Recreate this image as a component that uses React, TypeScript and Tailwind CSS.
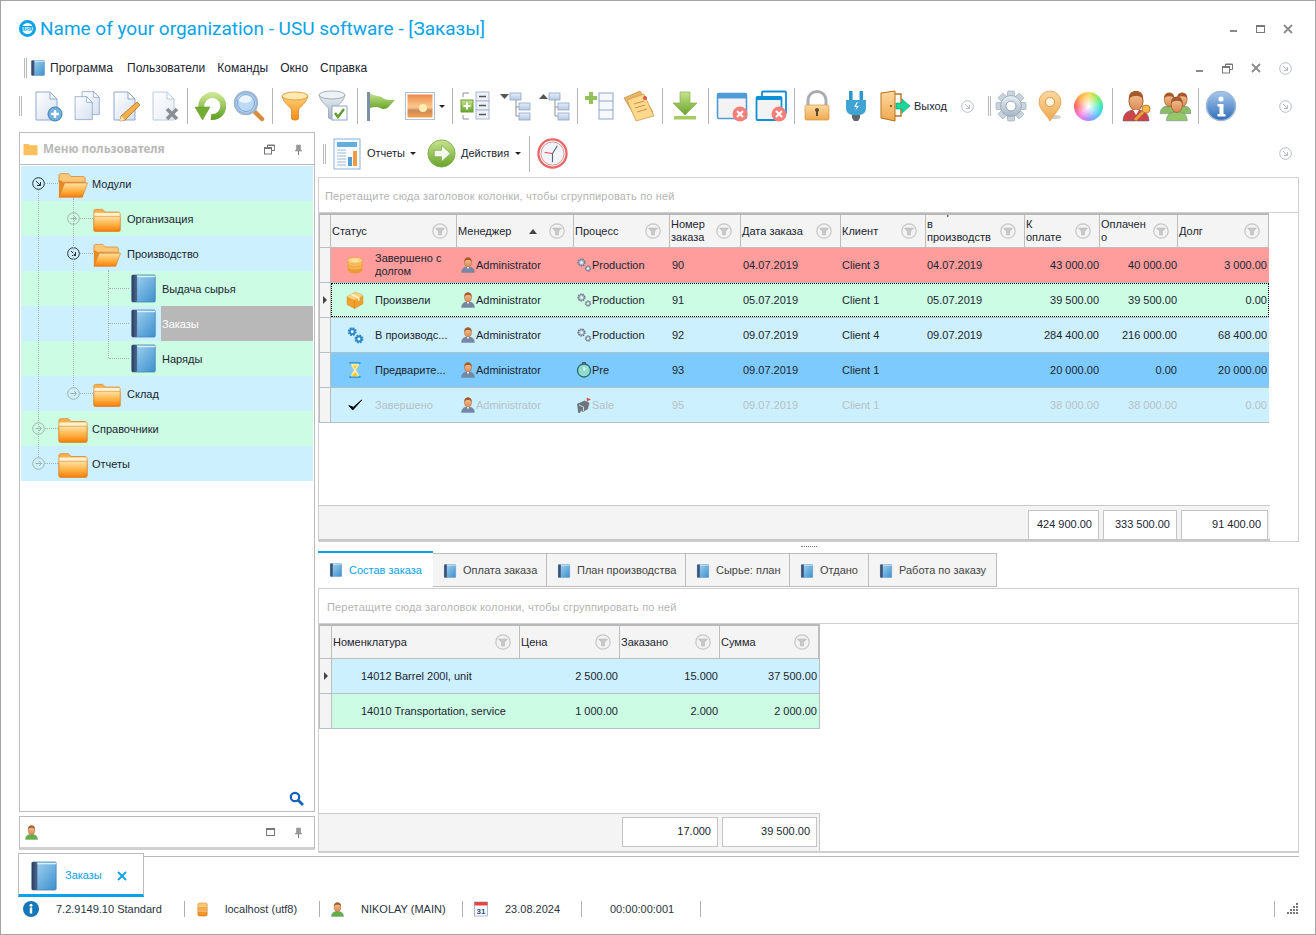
import React from "react";

const S = ({ s = 32, children, className = "" }: { s?: number; children: React.ReactNode; className?: string }) => (
  <svg width={s} height={s} viewBox="0 0 32 32" className={"shrink-0 " + className}>{children}</svg>
);

const Defs = () => (
  <svg className="absolute w-0 h-0">
    <defs>
      <linearGradient id="gDoc" x1="0" y1="0" x2="1" y2="1"><stop offset="0" stopColor="#ffffff" /><stop offset="1" stopColor="#d5e0f0" /></linearGradient>
      <linearGradient id="gOr" x1="0" y1="0" x2="0" y2="1"><stop offset="0" stopColor="#ffd27a" /><stop offset="1" stopColor="#f58a12" /></linearGradient>
      <linearGradient id="gPeach" x1="0" y1="0" x2="0" y2="1"><stop offset="0" stopColor="#fbd9a0" /><stop offset="1" stopColor="#f0a850" /></linearGradient>
      <linearGradient id="gFold" x1="0" y1="0" x2="0" y2="1"><stop offset="0" stopColor="#ffe3a3" /><stop offset="0.55" stopColor="#ffb144" /><stop offset="1" stopColor="#f57f0a" /></linearGradient>
      <linearGradient id="gBook" x1="0" y1="0" x2="1" y2="1"><stop offset="0" stopColor="#a8d8f2" /><stop offset="1" stopColor="#3d8fce" /></linearGradient>
      <linearGradient id="gSpine" x1="0" y1="0" x2="1" y2="0"><stop offset="0" stopColor="#2c3c5c" /><stop offset="1" stopColor="#4e6a92" /></linearGradient>
      <linearGradient id="gGr" x1="0" y1="0" x2="0" y2="1"><stop offset="0" stopColor="#c8e48e" /><stop offset="1" stopColor="#67a42c" /></linearGradient>
      <linearGradient id="gSteel" x1="0" y1="0" x2="0" y2="1"><stop offset="0" stopColor="#e8eef4" /><stop offset="1" stopColor="#a8b6c6" /></linearGradient>
      <linearGradient id="gSun" x1="0" y1="0" x2="0" y2="1"><stop offset="0" stopColor="#ee8a4c" /><stop offset="0.55" stopColor="#fbc98a" /><stop offset="0.7" stopColor="#c98a5a" /><stop offset="1" stopColor="#f6a04e" /></linearGradient>
      <linearGradient id="gBox" x1="0" y1="0" x2="0" y2="1"><stop offset="0" stopColor="#e8eef8" /><stop offset="1" stopColor="#b4c8e4" /></linearGradient>
      <linearGradient id="gInfo" x1="0" y1="0" x2="0" y2="1"><stop offset="0" stopColor="#a8c8ec" /><stop offset="1" stopColor="#2f6db8" /></linearGradient>
      <linearGradient id="gSkin" x1="0" y1="0" x2="0" y2="1"><stop offset="0" stopColor="#f6c69c" /><stop offset="1" stopColor="#d98a52" /></linearGradient>
    </defs>
  </svg>
);

const DocBase = ({ x = 0, y = 0, o = 1 }: { x?: number; y?: number; o?: number }) => (
  <g transform={`translate(${x} ${y})`} opacity={o}>
    <path d="M5 2h14l7 7v21H5z" fill="url(#gDoc)" stroke="#8fa8cc" strokeWidth="1" />
    <path d="M19 2v7h7z" fill="#fff" stroke="#8fa8cc" strokeWidth="1" />
  </g>
);
const DocPlus = () => (
  <S><DocBase x={-1} /><circle cx="23" cy="24" r="7" fill="#6fb0de" stroke="#3c7fb8" /><path d="M23 20v8M19 24h8" stroke="#fff" strokeWidth="2.4" /></S>
);
const Docs = () => (
  <S><g transform="translate(7 0) scale(.82)"><DocBase /></g><g transform="translate(0 5) scale(.82)"><DocBase /></g></S>
);
const DocEdit = () => (
  <S><DocBase x={-1} /><path d="M27 12l3 3-15 15-5 1 1-5z" fill="#f5b04c" stroke="#b9701c" strokeWidth=".8" /><path d="M10 31l1-5 4 4z" fill="#f8e3c0" /></S>
);
const DocDel = () => (
  <S><DocBase x={-1} o={0.6} /><path d="M18 19l10 10M28 19L18 29" stroke="#8a8f94" strokeWidth="3.6" /></S>
);
const Refresh = () => (
  <S><path d="M9 22a11 11 0 1 1 8 5" fill="none" stroke="url(#gGr)" strokeWidth="6" /><path d="M1 17h15l-7.5 13z" fill="#72ad32" stroke="#5c9426" strokeWidth=".5" /></S>
);
const Search = () => (
  <S><path d="M20 20l9 9" stroke="#d98a3a" strokeWidth="4.5" strokeLinecap="round" /><circle cx="13" cy="13" r="11" fill="#bcd8f4" stroke="#9db6d2" strokeWidth="2.5" /><ellipse cx="12" cy="9" rx="7" ry="4" fill="#e9f4fd" /><circle cx="13" cy="13" r="8.5" fill="none" stroke="#5c9cdc" strokeWidth=".8" /></S>
);
const Funnel = ({ gray = false }: { gray?: boolean }) => (
  <g>
    <path d="M3 6c2 8 8 10 9.5 14v9c2 1.5 5 1.5 7 0v-9C21 16 27 14 29 6z" fill={gray ? "url(#gSteel)" : "url(#gOr)"} stroke={gray ? "#8f9aa6" : "#d47c1a"} strokeWidth=".7" />
    <ellipse cx="16" cy="6" rx="13" ry="4" fill={gray ? "#eef2f6" : "#ffe9b0"} stroke={gray ? "#8f9aa6" : "#d89028"} strokeWidth=".8" />
  </g>
);
const FunnelO = () => <S><Funnel /></S>;
const FunnelC = () => (
  <S><g transform="translate(-2 -1)"><Funnel gray /></g><rect x="14" y="16" width="15" height="14" fill="#fff" stroke="#8ea6c6" /><path d="M17 23l3 4 6-8" fill="none" stroke="#5c9a2a" strokeWidth="2.4" /></S>
);
const Flag = () => (
  <S><rect x="2" y="2" width="3" height="29" fill="#7d90a8" /><path d="M5 3c5 4 10 2 13 5 3 2 7 2 12 2-4 4-7 9-11 9s-5-4-14-1z" fill="url(#gGr)" /></S>
);
const Pict = () => (
  <S><rect x="1.500" y="2.500" width="29" height="27" fill="#fff" stroke="#aebfd8" /><rect x="3.500" y="4.500" width="25" height="23" fill="url(#gSun)" /><circle cx="19" cy="18" r="4" fill="#ffeeb4" /></S>
);
const mini = (x: number, y: number, w = 11, h = 7) => <rect x={x} y={y} width={w} height={h} fill="url(#gBox)" stroke="#8ea6c6" strokeWidth=".8" />;
const GroupAdd = () => (
  <S>
    <path d="M9 3H3v4M3 25v4h6" fill="none" stroke="#8a9198" />
    <rect x="1" y="10" width="12" height="12" fill="url(#gGr)" stroke="#6a9c34" /><path d="M7 12.5v7M3.5 16h7" stroke="#fff" strokeWidth="2" />
    <rect x="16" y="2" width="13" height="9" fill="#eef2f8" stroke="#a8b8d0" /><rect x="16" y="11" width="13" height="9" fill="#eef2f8" stroke="#a8b8d0" /><rect x="16" y="20" width="13" height="9" fill="#eef2f8" stroke="#a8b8d0" />
    <path d="M19 6.5h7M19 15.5h7M19 24.5h7" stroke="#555" strokeWidth="1.6" />
  </S>
);
const TreeI = ({ up = false }: { up?: boolean }) => (
  <S>
    {up ? <path d="M1 9l4.5-5L10 9z" fill="#555" /> : <path d="M1 4h9L5.5 9z" fill="#555" />}
    {mini(11, 3)}
    <path d="M17 10v16h4M17 17h4" fill="none" stroke="#8a9198" />
    {mini(20, 13)}
    {mini(20, 23)}
  </S>
);
const AddRow = () => (
  <S>
    <rect x="15" y="3" width="14" height="26" fill="#f6f8fc" stroke="#8ea6cc" /><path d="M15 11h14M15 20h14" stroke="#8ea6cc" />
    <path d="M7 2v12M1 8h12" stroke="#93c25a" strokeWidth="4" />
  </S>
);
const Note = () => (
  <S>
    <path d="M1 8l16-7 13 21-16 8z" fill="#e8b566" stroke="#c48d3e" strokeWidth=".7" />
    <path d="M4 10l17-6 10 22-18 5z" fill="#fcd78c" stroke="#c9964a" strokeWidth=".7" />
    <path d="M11 14l10-3M12 18l10-3M14 22l10-3" stroke="#c9964a" /><circle cx="22" cy="8" r="2" fill="#e05050" />
  </S>
);
const Down = () => (
  <S><path d="M11 2h10v11h7L16 25 4 13h7z" fill="url(#gGr)" stroke="#7daa3c" strokeWidth=".6" /><rect x="5" y="26" width="22" height="3.5" fill="#a9cb64" /></S>
);
const XC = ({ cx = 24, cy = 24 }: { cx?: number; cy?: number }) => (
  <g><circle cx={cx} cy={cy} r="7.5" fill="#f77f7a" /><path d={`M${cx - 3} ${cy - 3}l6 6M${cx + 3} ${cy - 3}l-6 6`} stroke="#fff" strokeWidth="2" /></g>
);
const WinX = () => (
  <S><rect x="1.5" y="3.5" width="29" height="25" rx="1.5" fill="#f3f3f3" stroke="#4f9bd6" strokeWidth="1.6" /><rect x="1.5" y="3.5" width="29" height="5" fill="#4f9bd6" /><XC /></S>
);
const WinsX = () => (
  <S><rect x="7" y="1.5" width="24" height="22" rx="1" fill="#fff" stroke="#0f8fd6" strokeWidth="1.8" /><rect x="1.5" y="7" width="25" height="23" rx="1" fill="#f3f3f3" stroke="#0f8fd6" strokeWidth="1.8" /><rect x="1.5" y="7" width="25" height="3" fill="#0f8fd6" /><XC /></S>
);
const Lock = () => (
  <S><path d="M7 16V10a9 8.500 0 0 1 18 0v6" fill="none" stroke="#a9adb3" strokeWidth="3" /><rect x="4" y="15" width="24" height="15" rx="1.500" fill="url(#gPeach)" stroke="#cf9440" strokeWidth=".7" /><circle cx="16" cy="20" r="2" fill="#5b4a30" /><rect x="15" y="20" width="2" height="6" fill="#5b4a30" /></S>
);
const Plug = () => (
  <S><rect x="9" y="1" width="3.6" height="11" fill="#2f97c9" /><rect x="19.5" y="1" width="3.6" height="11" fill="#2f97c9" /><path d="M6 10h20v8c0 5-4 7-7 7h-6c-3 0-7-2-7-7z" fill="#3fa3d4" /><path d="M17 12l-3 5h3l-2 4 4-5h-3l2-4z" fill="#fff" /><path d="M12 25h8v3l-2 3h-4l-2-3z" fill="#5f6770" /></S>
);
const DoorI = () => (
  <S>
    <path d="M2 3l14-2v30L2 28z" fill="url(#gPeach)" stroke="#b87018" /><path d="M16 4h6v22h-6" fill="none" stroke="#b87018" strokeWidth="1.4" /><circle cx="12" cy="16" r="1.1" fill="#7a4a10" />
    <path d="M17 13h6V9l8 7-8 7v-4h-6z" fill="#18d89a" stroke="#0a9a6a" strokeWidth=".6" />
  </S>
);
const Gear = ({ s = 32 }: { s?: number }) => (
  <S s={s}>
    {[0, 45, 90, 135, 180, 225, 270, 315].map((a) => (
      <rect key={a} x="12.5" y="1" width="7" height="7" rx="1" fill="#c8d3de" stroke="#94a4b4" strokeWidth=".6" transform={`rotate(${a} 16 16)`} />
    ))}
    <circle cx="16" cy="16" r="10.5" fill="url(#gSteel)" stroke="#94a4b4" strokeWidth=".8" />
    <circle cx="16" cy="16" r="5" fill="#fff" stroke="#94a4b4" />
  </S>
);
const Pin = () => (
  <S><ellipse cx="21" cy="27" rx="6" ry="2" fill="#d0d0d0" /><path d="M16 31C12 24 5 19 5 12a11 11 0 0 1 22 0c0 7-7 12-11 19z" fill="url(#gPeach)" stroke="#e0a050" strokeWidth=".8" /><circle cx="16" cy="12" r="4.5" fill="#fff5e4" stroke="#d89a48" /></S>
);
const Wheel = () => (
  <div className="w-[29px] h-[29px] rounded-full shrink-0 bg-[radial-gradient(circle,#ffffff_0%,#ffffff00_62%),conic-gradient(#ffd75e,#8cec5a,#38e6c0,#58c4ff,#a48cff,#ff7ae0,#ff6464,#ffa84a,#ffd75e)]" />
);
const Person = ({ body = "#7f93ae", x = 0, y = 0, sc = 1 }: { body?: string; x?: number; y?: number; sc?: number }) => (
  <g transform={`translate(${x} ${y}) scale(${sc})`}>
    <path d="M3 31c0-7 4-10 9-11h8c5 1 9 4 9 11z" fill={body} stroke="#55667e" strokeWidth=".5" />
    <ellipse cx="16" cy="11" rx="7" ry="9.500" fill="url(#gSkin)" stroke="#a85a28" strokeWidth="1" />
    <path d="M9 10C8 3 12 1 16 1s8 2 7 9c-1-3-3-4-7-4s-6 1-7 4z" fill="#a55a2a" />
  </g>
);
const UserKey = () => (
  <S>
    <Person body="#c9454a" />
    <path d="M13 20l3 5 3-5z" fill="#fff" />
    <circle cx="26" cy="19" r="4" fill="#f4b84c" stroke="#c0802a" /><path d="M23 22l-8 8" stroke="#e5a43a" strokeWidth="3" />
  </S>
);
const Users = () => (
  <S>
    <Person body="#8cbd66" x={-1} y={2} sc={0.7} />
    <Person body="#8cbd66" x={12} y={2} sc={0.7} />
    <Person body="#93c76a" x={5} y={6} sc={0.8} />
  </S>
);
const Info = ({ s = 32 }: { s?: number }) => (
  <S s={s}>
    <circle cx="16" cy="16" r="14.500" fill="url(#gInfo)" stroke="#9cb8dc" strokeWidth="1.500" />
    <circle cx="16" cy="9" r="2.600" fill="#fff" /><path d="M12.500 14h6v10h2v2.500h-8V24h2v-7.500h-2z" fill="#fff" />
  </S>
);
const Report = () => (
  <S>
    <rect x="3" y="1" width="26" height="30" fill="#f8fbff" stroke="#8eb0d6" /><rect x="6" y="4" width="20" height="5" fill="#62aee0" />
    <path d="M6 12h9M6 15h9M6 18h9M6 21h9M6 24h9M6 27h9" stroke="#9fbcd8" />
    <rect x="17" y="19" width="4" height="9" fill="#4f9fd8" /><rect x="22" y="13" width="4" height="15" fill="#f59a3e" />
  </S>
);
const GoArrow = () => (
  <S s={29}>
    <circle cx="16" cy="16" r="15" fill="url(#gGr)" stroke="#7fae48" /><path d="M8 12.500h8V7l10 9-10 9v-5.500H8z" fill="#f2f7ea" stroke="#7aa046" strokeWidth=".7" />
  </S>
);
const Clock = () => (
  <S s={31}>
    <circle cx="16" cy="16" r="14.500" fill="#fff" stroke="#e8686a" strokeWidth="2.400" /><circle cx="16" cy="16" r="12" fill="#f2f5f8" stroke="#c04a4a" strokeWidth=".6" />
    <path d="M16 16l-8-1" stroke="#e04848" strokeWidth="1.200" /><path d="M16 16l5-8M16 16v9" stroke="#5a6a7a" strokeWidth="1.200" />
  </S>
);
const FolderC = ({ s = 30 }: { s?: number }) => (
  <S s={s}>
    <path d="M1 7c0-1 .6-2 2-2h8l3 3h15c1 0 2 1 2 2v18c0 1-1 2-2 2H3c-1 0-2-1-2-2z" fill="#f8b04a" stroke="#d8761a" strokeWidth=".7" />
    <rect x="1.500" y="9" width="29" height="5" fill="#fff1cf" /><rect x="1" y="13" width="30" height="17" rx="1" fill="url(#gFold)" stroke="#d8761a" strokeWidth=".6" />
  </S>
);
const FolderO = ({ s = 30 }: { s?: number }) => (
  <S s={s}>
    <path d="M1 7c0-1 .6-2 2-2h8l3 3h13c1 0 2 1 2 2v4H1z" fill="#fbc879" stroke="#d8761a" strokeWidth=".7" />
    <path d="M1 30V12h2l2 2 24 .500 2 0-1 2-4 13.500z" fill="#e88a24" />
    <path d="M7 15h24.500L26 30H1z" fill="url(#gFold)" stroke="#d8761a" strokeWidth=".6" />
  </S>
);
const Book = ({ s = 29 }: { s?: number }) => (
  <S s={s}>
    <rect x="3" y="1" width="26" height="30" rx="1.500" fill="url(#gBook)" stroke="#3a78ac" strokeWidth=".7" />
    <rect x="3" y="1" width="6" height="30" rx="1.500" fill="url(#gSpine)" />
    <rect x="9" y="2" width="20" height="1.500" fill="#dcf0fb" />
  </S>
);
const CircleArrow = ({ open = false, dim = false, s = 13 }: { open?: boolean; dim?: boolean; s?: number }) => {
  const c = dim ? "#b4bcc0" : open ? "#2a2f34" : "#9fb4ae";
  return (
    <svg width={s} height={s} viewBox="0 0 13 13" className="shrink-0">
      <circle cx="6.500" cy="6.500" r="5.800" fill="none" stroke={c} strokeWidth="1" />
      {open || dim ? <path d="M4 4l4.500 4.500M8.500 5v3.500H5" fill="none" stroke={c} strokeWidth="1" /> : <path d="M3.500 6.500h6M7 4l2.500 2.500L7 9" fill="none" stroke={c} strokeWidth="1" />}
    </svg>
  );
};
const FilterC = () => (
  <svg width="16" height="16" viewBox="0 0 16 16" className="shrink-0">
    <circle cx="8" cy="8" r="7.200" fill="#f3f3f3" stroke="#c6c6c6" strokeWidth="1.200" />
    <path d="M3.500 5h9L9.500 8.500V12h-3V8.500z" fill="#c8c8c8" stroke="#b4b4b4" strokeWidth=".5" />
  </svg>
);
const Admin = () => <S s={16}><Person body="#7488a6" /><path d="M14 20l2 5 2-5z" fill="#fff" /></S>;
const GearsG = () => (
  <S s={16}>
    <circle cx="11" cy="11" r="6.500" fill="#aebccc" stroke="#6a7a8c" strokeWidth="3.400" strokeDasharray="3 1.500" /><circle cx="11" cy="11" r="2.500" fill="#fff" />
    <circle cx="24" cy="23" r="4.800" fill="#aebccc" stroke="#6a7a8c" strokeWidth="3" strokeDasharray="2.500 1.300" /><circle cx="24" cy="23" r="1.800" fill="#fff" />
  </S>
);
const PreI = () => (
  <S s={16}>
    <circle cx="16" cy="17" r="13" fill="#8edcd0" stroke="#2e6a6a" strokeWidth="2.600" /><rect x="12" y="0" width="8" height="4" fill="#4a6a6a" />
    <path d="M16 17l6-6M16 17V9" stroke="#fff" strokeWidth="2" />
  </S>
);
const SaleI = () => (
  <S s={16}>
    <path d="M3 14l14-6 9 4-3 12-9 5-5-3-1 5H5z" fill="#6c767e" stroke="#4a5258" strokeWidth="1" />
    <path d="M6 16l9 4v8" fill="none" stroke="#d4dade" strokeWidth="2" /><path d="M22 12V2l7 3-7 3" fill="#d84a3a" stroke="#d84a3a" />
  </S>
);
const Coins = () => (
  <S s={18}>
    <rect x="3" y="8" width="26" height="17" fill="#f0a848" /><ellipse cx="16" cy="25" rx="13" ry="6" fill="#ee9c3a" /><ellipse cx="16" cy="19" rx="13" ry="6" fill="#f6b24e" stroke="#e08c28" strokeWidth=".7" /><ellipse cx="16" cy="13" rx="13" ry="6" fill="#f9bf5c" stroke="#e08c28" strokeWidth=".7" /><ellipse cx="16" cy="8" rx="13" ry="6" fill="#fbd07a" stroke="#e08c28" strokeWidth=".7" /><ellipse cx="16" cy="8" rx="7" ry="3" fill="#fde0a0" />
  </S>
);
const BoxI = () => (
  <S s={18}>
    <path d="M2 10l15-8 13 6v15L15 31 2 24z" fill="#f2a02e" stroke="#d07a14" strokeWidth=".8" /><path d="M2 10l13 6 15-8-13-6z" fill="#fbd27e" /><path d="M15 16v15" stroke="#d07a14" /><path d="M8 7l13 6v5l3-1.500v-5.500L11 5.500z" fill="#fff2d0" />
  </S>
);
const GearsB = () => (
  <S s={18}>
    <circle cx="11" cy="10" r="6" fill="#2e8ac8" stroke="#2e8ac8" strokeWidth="4" strokeDasharray="3 1.700" /><circle cx="11" cy="10" r="2.600" fill="#fff" />
    <circle cx="23" cy="23" r="6" fill="#2e8ac8" stroke="#2e8ac8" strokeWidth="4" strokeDasharray="3 1.700" /><circle cx="23" cy="23" r="2.600" fill="#fff" />
  </S>
);
const Hour = () => (
  <S s={18}>
    <rect x="6" y="2" width="20" height="3" fill="#2098e0" /><rect x="6" y="27" width="20" height="3" fill="#2098e0" />
    <path d="M9 5h14c0 6-5 8-5 11s5 5 5 11H9c0-6 5-8 5-11S9 11 9 5z" fill="#fdf2b8" stroke="#e0c050" strokeWidth=".7" /><path d="M11 27c1-4 3-6 5-7 2 1 4 3 5 7zM12 8h8l-4 6z" fill="#f8c83a" />
  </S>
);
const Check = () => (
  <S s={18}><path d="M5 17l7 8L28 7l-15 13z" fill="#000" stroke="#000" strokeWidth="1.500" /></S>
);
const UserG = () => <S s={15}><Person body="#62b044" /></S>;
const Db = () => (
  <S s={15}>
    <rect x="6" y="2" width="20" height="28" rx="4" fill="url(#gOr)" stroke="#c0701a" /><path d="M6 11h20M6 20h20" stroke="#fff" strokeWidth="1.400" /><path d="M6 12h20M6 21h20" stroke="#c0701a" />
  </S>
);
const Cal = () => (
  <S s={16}>
    <rect x="3" y="2" width="26" height="28" fill="#fff" stroke="#5878a8" /><rect x="3" y="2" width="26" height="7" fill="#e04848" />
    <text x="16" y="26" fontSize="16" fontWeight="700" textAnchor="middle" fill="#2a4a8a" fontFamily="Liberation Sans, sans-serif">31</text>
  </S>
);
const Logo = () => (
  <svg width="17" height="17" viewBox="0 0 17 17" className="shrink-0">
    <circle cx="8.500" cy="8.500" r="7" fill="none" stroke="#0aa3ea" strokeWidth="3" />
    <rect x="1" y="6" width="15" height="5" fill="#0aa3ea" />
    <text x="8.500" y="10.500" fontSize="5" fontWeight="700" textAnchor="middle" fill="#fff" fontFamily="Liberation Sans, sans-serif">USU</text>
  </svg>
);
const Grip = ({ className = "" }: { className?: string }) => (
  <div className={"w-[3px] h-[20px] shrink-0 border-x border-[#b8b8b8] " + className} />
);
const Sep = ({ className = "" }: { className?: string }) => <div className={"w-px h-[36px] shrink-0 bg-[#b4b4b4] " + className} />;
const Tb = ({ children, className = "" }: { children: React.ReactNode; className?: string }) => (
  <div className={"w-[39px] h-full shrink-0 flex items-center justify-center " + className}>{children}</div>
);
const Caret = ({ className = "" }: { className?: string }) => (
  <div className={"w-0 h-0 shrink-0 border-x-[3px] border-x-transparent border-t-[3px] border-t-[#222] " + className} />
);
const MinI = () => <div className="w-[7px] h-[2px] bg-[#8a8a8a] mt-[5px]" />;
const CloseI = ({ c = "#8a8a8a" }: { c?: string }) => (
  <svg width="10" height="10" viewBox="0 0 10 10"><path d="M1 1l8 8M9 1L1 9" stroke={c} strokeWidth="1.800" /></svg>
);
const RestoreI = () => (
  <svg width="11" height="11" viewBox="0 0 11 11"><path d="M3.500 3V1h7v5.500H7.500" fill="none" stroke="#777" /><rect x=".5" y="3.500" width="7" height="6.500" fill="#fff" stroke="#777" /><path d="M.5 4.500h7M3.500 1.500h7" stroke="#777" /></svg>
);
const PinI = () => (
  <svg width="9" height="11" viewBox="0 0 9 11"><path d="M2.500 1h4v4.500l1.500 1.500H1l1.500-1.500z" fill="#999" stroke="#888" strokeWidth=".5" /><path d="M4.500 7v4" stroke="#777" /></svg>
);
const MaxI = () => <div className="w-[9px] h-[8px] border border-[#777] border-t-2" />;

type TreeRow = { lvl: number; label: string; open?: boolean; sel?: boolean };
const treeRows: TreeRow[] = [
  { lvl: 0, label: "Модули", open: true },
  { lvl: 1, label: "Организация" },
  { lvl: 1, label: "Производство", open: true },
  { lvl: 2, label: "Выдача сырья" },
  { lvl: 2, label: "Заказы", sel: true },
  { lvl: 2, label: "Наряды" },
  { lvl: 1, label: "Склад" },
  { lvl: 0, label: "Справочники" },
  { lvl: 0, label: "Отчеты" },
];
const Hline = ({ className = "" }: { className?: string }) => <div className={"h-px shrink-0 border-t border-dotted border-[#a8b0b0] " + className} />;

const Tree = () => (
  <div className="relative mx-px mt-px">
    {treeRows.map((r, i) => (
      <div key={r.label} className={"h-[35px] flex items-center text-[11px] text-[#1c2530] " + (i % 2 === 0 ? "bg-[#cdf0ff]" : "bg-[#ccfce3]")}>
        {r.lvl === 0 && (
          <>
            <div className="w-[11px] shrink-0" /><CircleArrow open={r.open} /><Hline className="w-[13px]" /><div className="w-[30px] shrink-0">{r.open ? <FolderO /> : <FolderC />}</div><span className="ml-1 pt-0.5">{r.label}</span>
          </>
        )}
        {r.lvl === 1 && (
          <>
            <div className="w-[46px] shrink-0" /><CircleArrow open={r.open} /><Hline className="w-[13px]" /><div className="w-[28px] shrink-0">{r.open ? <FolderO s={28} /> : <FolderC s={28} />}</div><span className="ml-1.5 pt-0.5">{r.label}</span>
          </>
        )}
        {r.lvl === 2 && (
          <>
            <div className="w-[88px] shrink-0" /><Hline className="w-[20px]" /><div className="w-[24px] ml-0.5 shrink-0 flex justify-center"><Book /></div>
            <div className={"ml-1.5 h-full flex-1 flex items-center pl-px pt-0.5 " + (r.sel ? "bg-[#b8b8b8] text-white" : "")}>{r.label}</div>
          </>
        )}
      </div>
    ))}
    <div className="absolute left-[17px] top-[24px] h-[267px] border-l border-dotted border-[#a8b0b0]" />
    <div className="absolute left-[52px] top-[32px] h-[190px] border-l border-dotted border-[#a8b0b0]" />
    <div className="absolute left-[87px] top-[104px] h-[88px] border-l border-dotted border-[#a8b0b0]" />
  </div>
);

type Row = { bg: string; ic: React.ReactNode; st: string; p: React.ReactNode; pl: string; n: string; d: string; c: string; s: string; a: string; b: string; e: string; dim?: boolean; focus?: boolean };
const rows: Row[] = [
  { bg: "bg-[#ff9c9c]", ic: <Coins />, st: "Завершено с долгом", p: <GearsG />, pl: "Production", n: "90", d: "04.07.2019", c: "Client 3", s: "04.07.2019", a: "43 000.00", b: "40 000.00", e: "3 000.00" },
  { bg: "bg-[#ccfce3]", ic: <BoxI />, st: "Произвели", p: <GearsG />, pl: "Production", n: "91", d: "05.07.2019", c: "Client 1", s: "05.07.2019", a: "39 500.00", b: "39 500.00", e: "0.00", focus: true },
  { bg: "bg-[#cdf0ff]", ic: <GearsB />, st: "В производс...", p: <GearsG />, pl: "Production", n: "92", d: "09.07.2019", c: "Client 4", s: "09.07.2019", a: "284 400.00", b: "216 000.00", e: "68 400.00" },
  { bg: "bg-[#7dcaff]", ic: <Hour />, st: "Предварите...", p: <PreI />, pl: "Pre", n: "93", d: "09.07.2019", c: "Client 1", s: "", a: "20 000.00", b: "0.00", e: "20 000.00" },
  { bg: "bg-[#cdf0ff]", ic: <Check />, st: "Завершено", p: <SaleI />, pl: "Sale", n: "95", d: "09.07.2019", c: "Client 1", s: "", a: "38 000.00", b: "38 000.00", e: "0.00", dim: true },
];

const HeadCell = ({ children, sort = false, low = false }: { children: React.ReactNode; sort?: boolean; low?: boolean }) => (
  <div className="h-full flex items-center pl-px pr-2 border-r border-[#bdbdbd] overflow-hidden leading-[13px]">
    <div className={"flex-1 min-w-0 " + (low ? "self-end pb-[3px]" : "")}>{children}</div>
    {sort && <div className="w-0 h-0 mr-3 border-x-[4px] border-x-transparent border-b-[5px] border-b-[#444]" />}
    <FilterC />
  </div>
);
const RowHead = ({ arrow = false, w = "w-[11px]" }: { arrow?: boolean; w?: string }) => (
  <div className={"h-full shrink-0 bg-[#f4f4f4] border-r border-[#bdbdbd] flex items-center justify-center " + w}>
    {arrow && <div className="w-0 h-0 border-y-[4px] border-y-transparent border-l-[4px] border-l-[#444]" />}
  </div>
);
const GroupHint = ({ className = "" }: { className?: string }) => (
  <div className={"h-[35px] shrink-0 flex items-center text-[11px] tracking-[0.17px] text-[#b4b4b4] border-b border-[#cfcfcf] pt-0.5 " + className}>Перетащите сюда заголовок колонки, чтобы сгруппировать по ней</div>
);
const SumBox = ({ children, className = "" }: { children: React.ReactNode; className?: string }) => (
  <div className={"h-[30px] shrink-0 bg-white border border-[#c4c4c4] flex items-center justify-end pr-1.5 text-[11px] text-[#1c2530] " + className}>{children}</div>
);

const MainGrid = () => (
  <div className="h-[365px] shrink-0 border border-[#cfcfcf] flex flex-col">
    <GroupHint className="pl-1.5" />
    <div className="w-[950px] text-[11px] text-[#1c2530] border-r border-l border-[#bdbdbd]">
      <div className="h-[35px] flex border-t-2 border-b border-t-[#b8b8b8] border-b-[#bdbdbd] bg-[#f4f4f4]">
        <RowHead />
        <div className="grid grid-cols-[126px_117px_96px_71px_100px_85px_99px_75px_78px_91px] flex-1">
          <HeadCell>Статус</HeadCell>
          <HeadCell sort>Менеджер</HeadCell>
          <HeadCell>Процесс</HeadCell>
          <HeadCell>Номер<br />заказа</HeadCell>
          <HeadCell>Дата заказа</HeadCell>
          <HeadCell>Клиент</HeadCell>
          <HeadCell low>Отправлено<br />в<br />производств</HeadCell>
          <HeadCell>К<br />оплате</HeadCell>
          <HeadCell>Оплачен<br />о</HeadCell>
          <HeadCell>Долг</HeadCell>
        </div>
      </div>
      {rows.map((r) => (
        <div key={r.n} className="h-[35px] flex border-b border-[#b4c0c8]">
          <RowHead arrow={r.focus} />
          <div className={"grid grid-cols-[126px_117px_96px_71px_100px_85px_99px_75px_78px_91px] flex-1 items-center h-full " + r.bg + " " + (r.focus ? "outline-1 outline-dotted outline-black -outline-offset-1 " : "") + (r.dim ? "text-[#b6c0c6]" : "")}>
            <div className="flex items-center pl-[15px]"><div className="w-[18px] shrink-0">{r.ic}</div><span className="ml-[11px] leading-[13px]">{r.st}</span></div>
            <div className="flex items-center pl-[3px]"><Admin /><span>Administrator</span></div>
            <div className="flex items-center pl-0.5"><div className="w-4 shrink-0">{r.p}</div><span>{r.pl}</span></div>
            <div className="pl-0.5">{r.n}</div>
            <div className="pl-0.5">{r.d}</div>
            <div className="pl-px">{r.c}</div>
            <div className="pl-px">{r.s}</div>
            <div className="text-right pr-px">{r.a}</div>
            <div className="text-right pr-px">{r.b}</div>
            <div className="text-right pr-0.5">{r.e}</div>
          </div>
        </div>
      ))}
    </div>
    <div className="flex-1" />
    <div className="w-[951px] h-[36px] shrink-0 bg-[#f4f4f4] border-t border-b-2 border-[#c8c8c8] flex items-center justify-end gap-1 pr-[2px] pt-1">
      <SumBox className="w-[71px]">424 900.00</SumBox>
      <SumBox className="w-[74px]">333 500.00</SumBox>
      <SumBox className="w-[87px]">91 400.00</SumBox>
    </div>
  </div>
);

const tabs = [
  { t: "Состав заказа", w: "w-[115px]", a: true },
  { t: "Оплата заказа", w: "w-[114px]" },
  { t: "План производства", w: "w-[139px]" },
  { t: "Сырье: план", w: "w-[104px]" },
  { t: "Отдано", w: "w-[79px]" },
  { t: "Работа по заказу", w: "w-[128px]" },
];
const subRows = [
  { bg: "bg-[#cdf0ff]", n: "14012 Barrel 200l, unit", p: "2 500.00", q: "15.000", s: "37 500.00", a: true },
  { bg: "bg-[#ccfce3]", n: "14010 Transportation, service", p: "1 000.00", q: "2.000", s: "2 000.00" },
];

const SubGrid = () => (
  <div className="flex-1 mt-px border border-[#cfcfcf] border-b-2 flex flex-col">
    <GroupHint className="pl-2" />
    <div className="w-[501px] text-[11px] text-[#1c2530] border-x border-[#bdbdbd]">
      <div className="h-[35px] flex border-t-2 border-b border-t-[#b8b8b8] border-b-[#bdbdbd] bg-[#f4f4f4]">
        <RowHead w="w-[12px]" />
        <div className="grid grid-cols-[188px_100px_100px_99px] flex-1">
          <HeadCell>Номенклатура</HeadCell>
          <HeadCell>Цена</HeadCell>
          <HeadCell>Заказано</HeadCell>
          <HeadCell>Сумма</HeadCell>
        </div>
      </div>
      {subRows.map((r) => (
        <div key={r.n} className="h-[35px] flex border-b border-[#b4c0c8]">
          <RowHead arrow={r.a} w="w-[12px]" />
          <div className={"grid grid-cols-[188px_100px_100px_99px] flex-1 items-center h-full " + r.bg}>
            <div className="pl-[29px]">{r.n}</div>
            <div className="text-right pr-0.5">{r.p}</div>
            <div className="text-right pr-0.5">{r.q}</div>
            <div className="text-right pr-0.5">{r.s}</div>
          </div>
        </div>
      ))}
    </div>
    <div className="flex-1" />
    <div className="w-[501px] h-[38px] shrink-0 bg-[#f4f4f4] border-t border-r border-[#c8c8c8] flex items-center justify-end gap-1 pr-0.5 pb-0.5">
      <SumBox className="w-[96px]">17.000</SumBox>
      <SumBox className="w-[95px]">39 500.00</SumBox>
    </div>
  </div>
);

const StatusSep = ({ className = "" }: { className?: string }) => <div className={"w-px h-[16px] shrink-0 bg-[#b0b0b0] " + className} />;

export default function App() {
  return (
    <div className="w-[1316px] h-[935px] bg-white border border-[#a4a4a4] flex flex-col overflow-hidden text-[#1c2530] font-['Liberation_Sans',sans-serif]">
      <Defs />
      {/* title */}
      <div className="h-[47px] shrink-0 flex items-center pl-[18px] pt-[8px]">
        <Logo />
        <span className="ml-1 text-[19px] leading-none text-[#0aa3ea] whitespace-nowrap font-['Roboto',sans-serif]">Name of your organization - USU software - [Заказы]</span>
        <div className="ml-auto flex items-center mr-3.5">
          <div className="w-[27px] flex justify-center"><MinI /></div>
          <div className="w-[27px] flex justify-center"><MaxI /></div>
          <div className="w-[27px] flex justify-center"><CloseI /></div>
        </div>
      </div>
      {/* menu */}
      <div className="h-[24px] mt-2 shrink-0 flex items-center pl-[23px] text-[12px]">
        <Grip className="h-[18px]" />
        <div className="ml-[3px]"><Book s={16} /></div>
        <div className="ml-[4px] flex gap-3 whitespace-nowrap">
          <span className="w-[65px]">Программа</span><span>Пользователи</span><span>Команды</span><span>Окно</span><span>Справка</span>
        </div>
        <div className="ml-auto flex items-center pr-[23px]">
          <div className="w-[28px] flex justify-center"><MinI /></div>
          <div className="w-[28px] flex justify-center"><RestoreI /></div>
          <div className="w-[29px] flex justify-center"><CloseI /></div>
          <div className="ml-[9px]"><CircleArrow dim /></div>
        </div>
      </div>
      {/* toolbar */}
      <div className="h-[40px] mt-1.5 shrink-0 flex items-center pl-[18px] pr-[23px]">
        <Grip className="mr-1.5" />
        <Tb><DocPlus /></Tb><Tb><Docs /></Tb><Tb><DocEdit /></Tb><Tb><DocDel /></Tb>
        <Sep className="ml-[3px]" />
        <Tb className="ml-0.5"><Refresh /></Tb><Tb><Search /></Tb>
        <Sep className="ml-1" />
        <Tb className="ml-0.5"><FunnelO /></Tb><Tb><FunnelC /></Tb>
        <Sep className="ml-1" />
        <Tb className="ml-[3px]"><Flag /></Tb><Tb><Pict /></Tb><Caret />
        <Sep className="ml-[7px]" />
        <Tb className="ml-[3px]"><GroupAdd /></Tb><Tb className="w-[38px]"><TreeI /></Tb><Tb><TreeI up /></Tb>
        <Sep className="ml-1" />
        <Tb className="ml-0.5"><AddRow /></Tb><Tb><Note /></Tb>
        <Sep className="ml-1" />
        <Tb className="ml-0.5"><Down /></Tb>
        <Sep className="ml-1" />
        <Tb className="ml-[3px]"><WinX /></Tb><Tb><WinsX /></Tb>
        <Sep className="ml-1" />
        <Tb className="ml-0.5"><Lock /></Tb><Tb><Plug /></Tb>
        <div className="ml-1 shrink-0"><DoorI /></div>
        <span className="ml-[3px] w-[34px] text-[11px] shrink-0">Выход</span>
        <div className="ml-[13px]"><CircleArrow dim /></div>
        <Grip className="ml-3.5" />
        <Tb><Gear /></Tb><Tb><Pin /></Tb><Tb><Wheel /></Tb>
        <Sep className="ml-1" />
        <Tb className="ml-[3px]"><UserKey /></Tb><Tb><Users /></Tb>
        <Sep className="ml-1" />
        <Tb className="ml-0.5"><Info /></Tb>
        <div className="ml-auto"><CircleArrow dim /></div>
      </div>
      {/* main */}
      <div className="h-[721px] mt-1.5 shrink-0 flex pl-[18px] gap-[3px]">
        <div className="w-[296px] shrink-0 flex flex-col gap-1 pb-[3px]">
          <div className="h-[680px] shrink-0 border border-[#bcbcbc] flex flex-col">
            <div className="h-[32px] shrink-0 border-b border-[#bcbcbc] flex items-center pl-[3px] pr-[11px] pt-px">
              <S s={15}><path d="M1 8V6c0-1 1-2 2-2h9l3 3h14c1 0 2 1 2 2v19H1z" fill="#fbbf5c" /></S>
              <span className="ml-[5px] text-[11.700px] font-bold text-[#b9b9b9] whitespace-nowrap font-['Noto_Sans',sans-serif]">Меню пользователя</span>
              <div className="ml-auto flex items-center gap-[19px]"><RestoreI /><PinI /></div>
            </div>
            <Tree />
            <div className="flex-1" />
            <div className="flex justify-end pr-[10px] pb-[5px]">
              <svg width="15" height="15" viewBox="0 0 15 15"><circle cx="6" cy="6" r="4.200" fill="none" stroke="#0e62b8" strokeWidth="2.200" /><path d="M9 9l5 5" stroke="#0e62b8" strokeWidth="2.600" /></svg>
            </div>
          </div>
          <div className="flex-1 border border-[#bcbcbc] border-b-[3px] border-b-[#d0d0d0] flex items-center pl-1 pr-[11px]">
            <UserG />
            <div className="ml-auto flex items-center gap-[19px]"><div className="w-[9px] h-[8px] border border-[#777] border-t-2" /><PinI /></div>
          </div>
        </div>
        <div className="w-[981px] shrink-0 flex flex-col">
          <div className="h-[45px] shrink-0 flex items-center pl-[5px] pr-[6px] pb-0.5 text-[11px]">
            <Grip />
            <div className="ml-[5px]"><Report /></div>
            <span className="ml-1 w-[42px]">Отчеты</span>
            <Caret className="ml-px" />
            <div className="ml-[11px]"><GoArrow /></div>
            <span className="ml-[5px] w-[52px]">Действия</span>
            <Caret className="ml-0.5" />
            <Sep className="ml-2" />
            <div className="ml-[7px]"><Clock /></div>
            <div className="ml-auto pr-[1px]"><CircleArrow dim /></div>
          </div>
          <MainGrid />
          <div className="h-[9px] shrink-0 flex items-center justify-center">
            <div className="w-[16px] border-t border-dotted border-[#777]" />
          </div>
          <div className="h-[36px] shrink-0 flex items-end text-[11px]">
            {tabs.map((t) => (
              <div key={t.t} className={"shrink-0 flex items-center whitespace-nowrap " + t.w + " " + (t.a ? "h-[36px] pl-[11px] border-t-2 border-[#0aa3ea] text-[#0aa3ea] bg-white" : "h-[34px] pl-[10px] pt-px bg-[#f4f4f4] border-t border-r border-b border-[#bdbdbd] text-[#444]")}>
                <Book s={14} /><span className="ml-[6px]">{t.t}</span>
              </div>
            ))}
          </div>
          <SubGrid />
        </div>
      </div>
      {/* doc tab strip */}
      <div className="h-[44px] shrink-0 flex pl-[17px]">
        <div className="w-[126px] shrink-0 border border-[#bcbcbc] border-b-[3px] border-b-[#0aa3ea] flex items-center pl-[10px] pt-[3px] bg-white">
          <Book s={30} />
          <span className="ml-1.5 w-[37px] text-[11px] text-[#0aa3ea]">Заказы</span>
          <div className="ml-[15px]"><CloseI c="#0aa3ea" /></div>
        </div>
        <div className="w-[1155px] mt-[3px] border-t border-[#bcbcbc] h-0 shrink-0" />
      </div>
      {/* status */}
      <div className="h-[24px] shrink-0 flex items-center pl-[22px] text-[11px] whitespace-nowrap text-[#2a3440]">
        <svg width="16" height="16" viewBox="0 0 16 16" className="shrink-0"><circle cx="8" cy="8" r="8" fill="#1478b8" /><circle cx="8" cy="4.200" r="1.500" fill="#fff" /><rect x="6.800" y="6.500" width="2.400" height="6" fill="#fff" /></svg>
        <span className="ml-[17px] w-[107px]">7.2.9149.10 Standard</span>
        <StatusSep className="ml-[21px]" />
        <div className="ml-[10px]"><Db /></div>
        <span className="ml-[15px] w-[73px]">localhost (utf8)</span>
        <StatusSep className="ml-[21px]" />
        <div className="ml-[10px]"><UserG /></div>
        <span className="ml-[16px] w-[80px]">NIKOLAY (MAIN)</span>
        <StatusSep className="ml-[21px]" />
        <div className="ml-[10px]"><Cal /></div>
        <span className="ml-[16px] w-[56px]">23.08.2024</span>
        <StatusSep className="ml-[20px]" />
        <span className="ml-[28px] w-[66px]">00:00:00:001</span>
        <StatusSep className="ml-[24px]" />
        <StatusSep className="ml-[573px]" />
        <svg width="12" height="12" viewBox="0 0 12 12" className="ml-[12px] shrink-0" fill="#777">
          <rect x="9" y="0" width="2" height="2" /><rect x="6" y="3" width="2" height="2" /><rect x="9" y="3" width="2" height="2" /><rect x="3" y="6" width="2" height="2" /><rect x="6" y="6" width="2" height="2" /><rect x="9" y="6" width="2" height="2" /><rect x="0" y="9" width="2" height="2" /><rect x="3" y="9" width="2" height="2" /><rect x="6" y="9" width="2" height="2" /><rect x="9" y="9" width="2" height="2" />
        </svg>
      </div>
    </div>
  );
}
